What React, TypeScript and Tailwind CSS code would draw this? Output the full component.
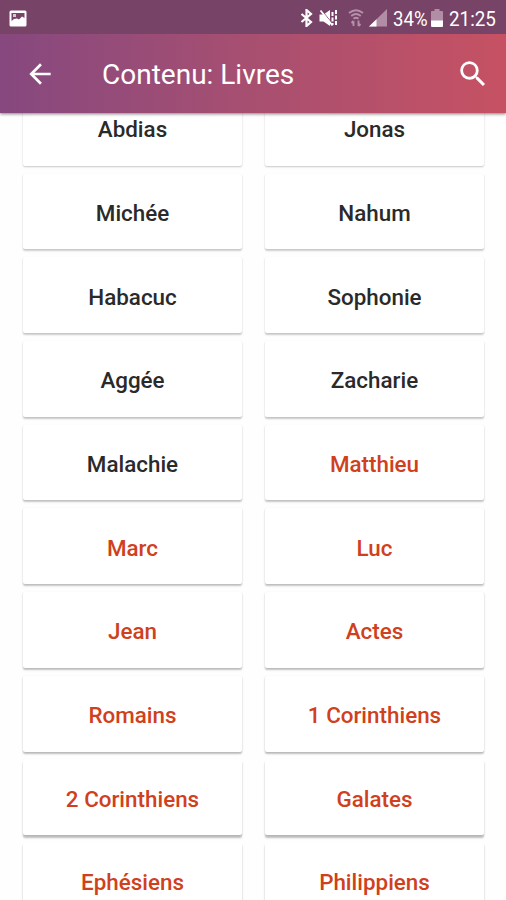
type Book = { name: string; testament: "old" | "new" };

const books: Book[] = [
  { name: "Abdias", testament: "old" },
  { name: "Jonas", testament: "old" },
  { name: "Michée", testament: "old" },
  { name: "Nahum", testament: "old" },
  { name: "Habacuc", testament: "old" },
  { name: "Sophonie", testament: "old" },
  { name: "Aggée", testament: "old" },
  { name: "Zacharie", testament: "old" },
  { name: "Malachie", testament: "old" },
  { name: "Matthieu", testament: "new" },
  { name: "Marc", testament: "new" },
  { name: "Luc", testament: "new" },
  { name: "Jean", testament: "new" },
  { name: "Actes", testament: "new" },
  { name: "Romains", testament: "new" },
  { name: "1 Corinthiens", testament: "new" },
  { name: "2 Corinthiens", testament: "new" },
  { name: "Galates", testament: "new" },
  { name: "Ephésiens", testament: "new" },
  { name: "Philippiens", testament: "new" },
];

function StatusBar() {
  return (
    <div className="flex h-[34px] items-center bg-[#774366] pl-[9px] pr-[10px] pt-[2px] text-white">
      <svg width="18" height="17" viewBox="0 0 18 17">
        <rect x="0.5" y="0.5" width="17" height="16" rx="1.5" fill="#fff" />
        <path d="M2.5 3h13v5l-2.500-1.500-3 3-2-1-3 .5-2.500 2z" fill="#774366" />
        <path d="M4 4h3v3H4z" fill="#d9c6d4" />
      </svg>
      <svg className="ml-auto" width="13" height="18" viewBox="0 0 12 18" fill="none" stroke="#fff" strokeWidth="2.2">
        <path d="M1 5l9.500 8L6 17V1l4.500 4L1 13" />
      </svg>
      <svg className="ml-[6px]" width="19" height="18" viewBox="0 0 19 18">
        <path d="M0.500 5.500h4L11 1v16l-6.500-4.500h-4z" fill="#fff" />
        <path d="M2.500 1l12 15" stroke="#774366" strokeWidth="1" />
        <path d="M1.500 1.500l12 15" stroke="#fff" strokeWidth="1.800" />
        <path d="M13.500 3v13M17 1v16" stroke="#fff" strokeWidth="2" strokeDasharray="4 1.500" />
      </svg>
      <svg className="ml-[10px]" width="16" height="18" viewBox="0 0 16 18" fill="none" stroke="#b590aa" strokeWidth="1.900">
        <path d="M1 4q7-5.500 14 0M3.200 7q4.800-3.800 9.600 0M5.500 9.700q2.500-2 5 0" />
        <path d="M5.500 17v-5M3.500 14l2-2M10.500 11.500v5.500M12.500 15l-2 2" />
      </svg>
      <svg className="ml-[5px]" width="18" height="18" viewBox="0 0 18 18">
        <path d="M18 0v17.500H0z" fill="#b18da6" />
        <path d="M7.500 10.200v7.300H0z" fill="#fff" />
      </svg>
      <span className="ml-[6px] w-[34px] pt-px text-[20px] leading-none">
        <span className="inline-block origin-left scale-x-[0.93]">34%</span>
      </span>
      <svg className="ml-[4px]" width="12" height="18" viewBox="0 0 12 18">
        <path d="M3.500 0h5v2H11q1 0 1 1v9H0V3q0-1 1-1h2.500z" fill="#b18da6" />
        <path d="M0 11.500h12V17q0 1-1 1H1q-1 0-1-1z" fill="#fff" />
      </svg>
      <span className="ml-[6px] w-[47px] pt-px text-[20px] leading-none">
        <span className="inline-block origin-left scale-x-[0.94]">21:25</span>
      </span>
    </div>
  );
}

function AppBar() {
  return (
    <header className="flex h-[79px] items-center bg-linear-to-r from-[#86487f] via-[#a84f70] to-[#c65163] pl-[24px] pr-[16px] text-white">
      <svg width="32" height="32" viewBox="0 0 24 24" fill="#fff">
        <path d="M20 11H7.830l5.590-5.590L12 4l-8 8 8 8 1.410-1.410L7.830 13H20v-2z" />
      </svg>
      <h1 className="ml-[46px] pt-[3px] text-[28px] leading-none">Contenu: Livres</h1>
      <svg className="ml-auto" width="34" height="34" viewBox="0 0 24 24" fill="#fff">
        <path d="M15.500 14h-.790l-.280-.270A6.471 6.471 0 0 0 16 9.500 6.500 6.500 0 1 0 9.500 16c1.610 0 3.090-.590 4.230-1.570l.270.280v.790l5 4.990L20.490 19l-4.990-5zm-6 0C7.010 14 5 11.990 5 9.500S7.010 5 9.500 5 14 7.010 14 9.500 11.990 14 9.500 14z" />
      </svg>
    </header>
  );
}

function BookCard({ book, row }: { book: Book; row: number }) {
  const color = book.testament === "old" ? "text-[#2a2a2a]" : "text-[#d0401c]";
  // The shadow deepens for cards further down the screen.
  const boxShadow = `0 ${1 + row * 0.14}px 2px rgba(0,0,0,${0.17 + row * 0.01}), 0 1px 2px rgba(0,0,0,0.06)`;
  return (
    <div
      className={`flex h-[75.700px] items-center justify-center rounded-[2px] bg-white pt-[3px] text-[22.400px] font-medium leading-none ${color}`}
      style={{ boxShadow }}
    >
      {book.name}
    </div>
  );
}

export default function App() {
  return (
    <div className="flex h-[900px] w-[506px] flex-col overflow-hidden bg-[#fefefe] font-[Roboto,sans-serif]">
      <div className="relative z-10 shadow-[0_1px_3px_rgba(0,0,0,0.5)]">
        <StatusBar />
        <AppBar />
      </div>
      <main className="min-h-0 flex-1 overflow-hidden pl-[23px] pr-[22px]">
        <div className="-mt-[23px] grid grid-cols-2 gap-x-[23px] gap-y-[8px]">
          {books.map((book, i) => (
            <BookCard key={book.name} book={book} row={Math.floor(i / 2)} />
          ))}
        </div>
      </main>
    </div>
  );
}
